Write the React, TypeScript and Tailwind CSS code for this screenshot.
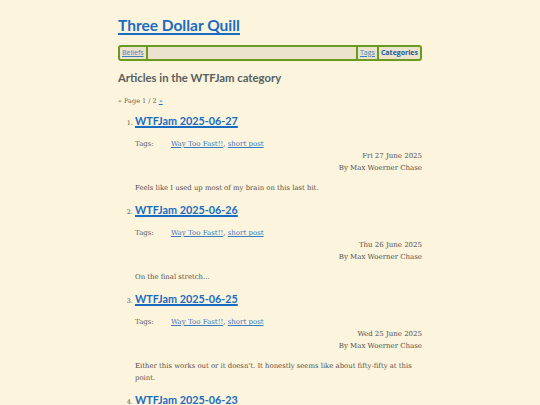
import React from "react";

const posts = [
  { title: "WTFJam 2025-06-27", date: "Fri 27 June 2025", body: "Feels like I used up most of my brain on this last bit." },
  { title: "WTFJam 2025-06-26", date: "Thu 26 June 2025", body: "On the final stretch..." },
  { title: "WTFJam 2025-06-25", date: "Wed 25 June 2025", body: "Either this works out or it doesn't. It honestly seems like about fifty-fifty at this point." },
  { title: "WTFJam 2025-06-23", date: "Mon 23 June 2025", body: "Sort of picking up steam." },
];

const sans = "font-['Lato',sans-serif]";
const navSans = "font-['Open_Sans',sans-serif]";
const serif = "font-['DejaVu_Serif',serif]";

export default function App() {
  return (
    <div className="min-h-screen bg-[#fcf4dc] text-[#555]">
      <div className="mx-auto w-[304px] pt-[14px]">
        <h1 className={`${sans} text-[15.5px] leading-[22px] font-bold text-[#1a6cc2] underline decoration-[1.5px] underline-offset-2`}>
          Three Dollar Quill
        </h1>
        <nav className="mt-[9px] flex h-[16px] items-stretch rounded-[3px] border-2 border-[#6b9b1e] bg-[#ebe3ce] text-[7px] leading-[12px]">
          <a className={`${navSans} border-r-2 border-[#6b9b1e] px-[2px] text-[#3f7fc0] underline`}>Beliefs</a>
          <div className="flex-1" />
          <a className={`${navSans} border-x-2 border-[#6b9b1e] px-[2px] text-[#3f7fc0] underline`}>Tags</a>
          <a className={`${navSans} px-[2px] font-bold text-[#1f5a99]`}>Categories</a>
        </nav>
        <h2 className={`${sans} mt-[8px] text-[11.3px] leading-[18px] font-bold text-[#566062]`}>
          Articles in the WTFJam category
        </h2>
        <div className={`${serif} mt-[9px] text-[6.5px] leading-[10px] text-[#606060]`}>
          « Page 1 / 2 <a className="text-[#1b6fc6] underline">»</a>
        </div>
        <ol className={`${serif} mt-[6px] list-decimal pl-[17px] text-[6.5px] text-[#555]`}>
          {posts.map((p) => (
            <li key={p.title} className="mb-[7px]">
              <h3 className={`${sans} text-[10.8px] leading-[18px] font-bold text-[#1a6cc2] underline decoration-[1.5px]`}>
                {p.title}
              </h3>
              <div className="mt-[8px] flex text-[7px] leading-[12px]">
                <span className="w-[36px] text-[#606060]">Tags:</span>
                <span>
                  <a className="text-[#3a7ac0] underline">Way Too Fast!!</a>
                  <span>, </span>
                  <a className="text-[#3a7ac0] underline">short post</a>
                </span>
              </div>
              <div className="text-right text-[7px] leading-[12px] text-[#505050]">
                <div>{p.date}</div>
                <div>By Max Woerner Chase</div>
              </div>
              <p className="mt-[8px] text-[6.9px] leading-[12px] text-[#505050]">{p.body}</p>
            </li>
          ))}
        </ol>
      </div>
    </div>
  );
}
